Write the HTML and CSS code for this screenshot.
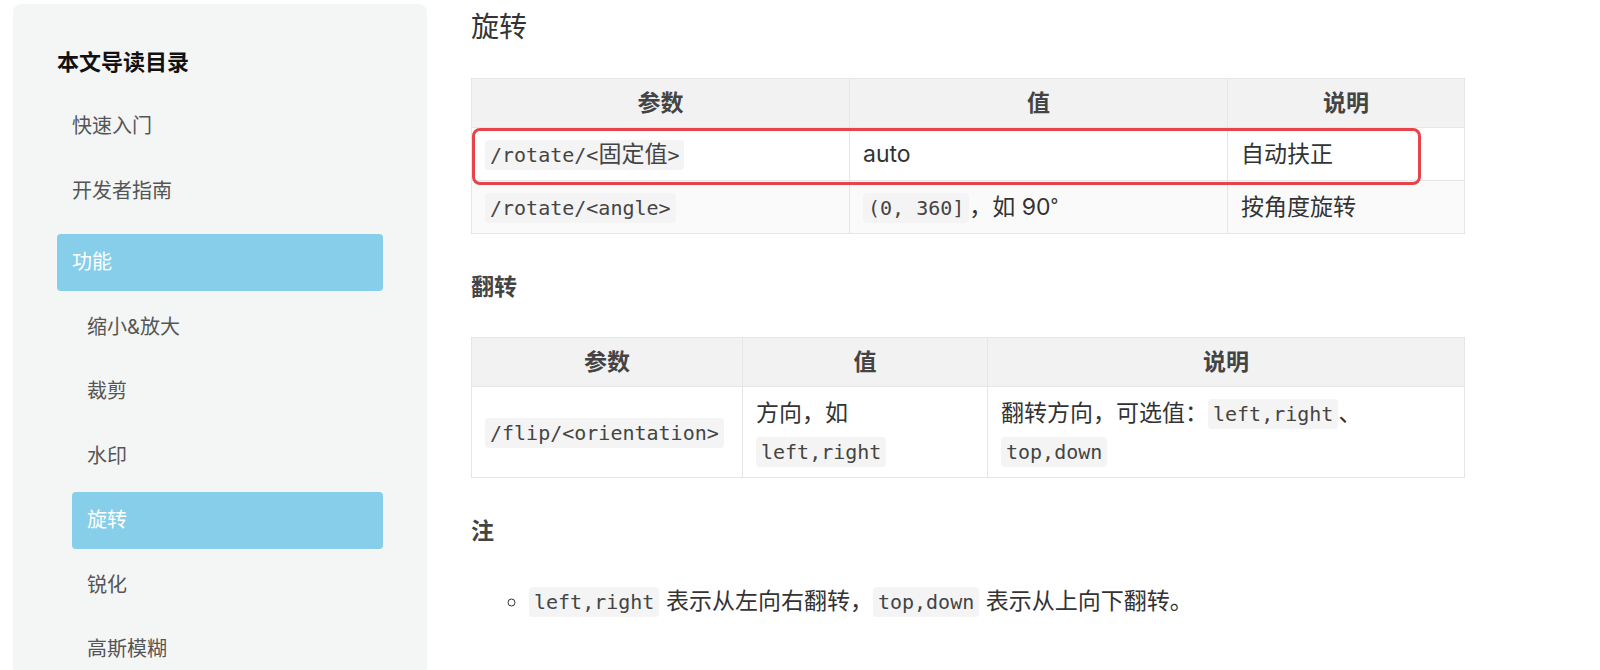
FILE: index.html
```html
<!DOCTYPE html>
<html lang="zh-CN">
<head>
<meta charset="utf-8">
<title>旋转</title>
<link rel="stylesheet" href="styles.css">
</head>
<body>
<div class="page">
  <aside class="toc">
    <div class="toc-title">本文导读目录</div>
    <ul class="toc-list">
      <li><a class="toc-item">快速入门</a></li>
      <li><a class="toc-item">开发者指南</a></li>
      <li class="toc-group">
        <a class="toc-item active">功能</a>
        <ul class="toc-sub">
          <li><a class="toc-item">缩小&amp;放大</a></li>
          <li><a class="toc-item">裁剪</a></li>
          <li><a class="toc-item">水印</a></li>
          <li><a class="toc-item active">旋转</a></li>
          <li><a class="toc-item">锐化</a></li>
          <li><a class="toc-item">高斯模糊</a></li>
        </ul>
      </li>
    </ul>
  </aside>

  <main class="content">
    <h2 class="doc-h2">旋转</h2>

    <div class="table-wrap">
      <table class="doc-table">
        <colgroup>
          <col class="t1-c1"><col class="t1-c2"><col class="t1-c3">
        </colgroup>
        <thead>
          <tr><th>参数</th><th>值</th><th>说明</th></tr>
        </thead>
        <tbody>
          <tr>
            <td><code>/rotate/&lt;<span class="code-cjk">固定值</span>&gt;</code></td>
            <td>auto</td>
            <td>自动扶正</td>
          </tr>
          <tr>
            <td><code>/rotate/&lt;angle&gt;</code></td>
            <td><code>(0, 360]</code>，如 90<span class="deg">°</span></td>
            <td>按角度旋转</td>
          </tr>
        </tbody>
      </table>
      <div class="highlight"></div>
    </div>

    <h4 class="doc-h4">翻转</h4>

    <table class="doc-table">
      <colgroup>
        <col class="t2-c1"><col class="t2-c2"><col class="t2-c3">
      </colgroup>
      <thead>
        <tr><th>参数</th><th>值</th><th>说明</th></tr>
      </thead>
      <tbody>
        <tr>
          <td><code>/flip/&lt;orientation&gt;</code></td>
          <td>方向，如 <code>left,right</code></td>
          <td>翻转方向，可选值：<code>left,right</code>、<code>top,down</code></td>
        </tr>
      </tbody>
    </table>

    <h4 class="doc-h4">注</h4>

    <ul class="notes">
      <li><code>left,right</code> 表示从左向右翻转，<code>top,down</code> 表示从上向下翻转。</li>
    </ul>
  </main>
</div>
</body>
</html>
```

FILE: styles.css
```css
html, body {
  margin: 0;
  height: 670px;
  overflow: hidden;
  background: #ffffff;
}

body {
  font-family: Inter, "Noto Sans CJK SC", sans-serif;
  color: #333333;
}

.page {
  display: flex;
  align-items: flex-start;
  gap: 44px;
  padding: 4px 0 0 13px;
}

/* ---------- sidebar ---------- */
.toc {
  flex-shrink: 0;
  width: 414px;
  height: 740px;
  box-sizing: border-box;
  padding: 43px 44px 40px;
  background: #f4f5f5;
  border-radius: 8px;
}

.toc-title {
  font-size: 22px;
  line-height: 30px;
  font-weight: 700;
  color: #111111;
  margin-bottom: 21px;
}

.toc-list,
.toc-sub {
  list-style: none;
  margin: 0;
  padding: 0;
}

.toc-sub {
  margin-left: 15px;
}

.toc-group {
  margin-top: 14.5px;
}

.toc-item {
  display: block;
  height: 57px;
  line-height: 57px;
  margin-bottom: 7.5px;
  padding-left: 15px;
  font-size: 20px;
  color: #555555;
  border-radius: 4px;
}

.toc-item.active {
  background: #87ceeb;
  color: #ffffff;
}

/* ---------- content ---------- */
.content {
  width: 993px;
  padding-top: 6px;
  font-size: 23px;
  line-height: 38px;
}

.doc-h2 {
  margin: 0 0 34px;
  font-size: 28px;
  line-height: 34px;
  font-weight: 400;
  color: #333333;
}

.doc-h4 {
  margin: 34px 0 31px;
  font-size: 23px;
  line-height: 38px;
  font-weight: 700;
  color: #444444;
}

.table-wrap {
  position: relative;
}

.doc-table {
  width: 993px;
  border-collapse: collapse;
  table-layout: fixed;
}

.doc-table th,
.doc-table td {
  border: 1px solid #e6e6e6;
  padding: 7px 13px;
  text-align: left;
  vertical-align: middle;
}

.doc-table th {
  padding: 5px 13px;
  background: #f2f2f2;
  font-weight: 700;
  text-align: center;
  color: #444444;
}

.doc-table tbody tr:nth-child(even) {
  background: #fafafa;
}

.t1-c1 { width: 378px; }
.t1-c2 { width: 378px; }
.t1-c3 { width: 237px; }

.t2-c1 { width: 271px; }
.t2-c2 { width: 245px; }
.t2-c3 { width: 477px; }

code {
  font-family: "DejaVu Sans Mono", "Noto Sans CJK SC", monospace;
  font-size: 20px;
  line-height: 1;
  padding: 3px 5px;
  background: #f4f4f4;
  border-radius: 4px;
  color: #444444;
}

.code-cjk {
  font-family: "Noto Sans CJK SC", sans-serif;
  font-size: 23px;
  line-height: 1;
}

.deg {
  font-size: 17px;
  vertical-align: 4px;
  line-height: 1;
}

.highlight {
  position: absolute;
  left: 1px;
  top: 50px;
  width: 949px;
  height: 57px;
  box-sizing: border-box;
  border: 3px solid #e8424a;
  border-radius: 8px;
  pointer-events: none;
}

.notes {
  margin: 32px 0 0;
  padding-left: 58px;
  list-style: circle;
}
```
